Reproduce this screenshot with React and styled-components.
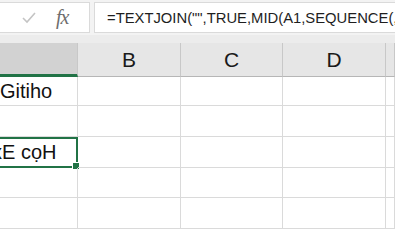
import React from "react";
import styled, { createGlobalStyle } from "styled-components";

const GlobalStyle = createGlobalStyle`
  html, body {
    margin: 0;
    padding: 0;
    background: #ffffff;
    overflow: hidden;
  }
  body {
    font-family: "Liberation Sans", Arial, sans-serif;
  }
`;

const Sheet = styled.div`
  width: 395px;
  height: 229px;
  overflow: hidden;
  display: flex;
  flex-direction: column;
  background: #ffffff;
`;

const FormulaBar = styled.div`
  height: 35px;
  box-sizing: border-box;
  padding: 2px 0 2px 0;
  display: flex;
  gap: 4px;
  background: #f3f3f3;
`;

const NameArea = styled.div`
  width: 90px;
  box-sizing: border-box;
  background: #ffffff;
  border: 1px solid #dadada;
  border-left: none;
  display: flex;
  align-items: center;
  padding-left: 22px;
  gap: 20px;
`;

const Fx = styled.span`
  font-family: "Liberation Serif", "Times New Roman", serif;
  font-style: italic;
  font-size: 20px;
  color: #6e6e6e;
  letter-spacing: -1px;
`;

const FormulaInput = styled.div`
  flex: 1;
  box-sizing: border-box;
  background: #ffffff;
  border: 1px solid #dadada;
  border-right: none;
  display: flex;
  align-items: center;
  padding-left: 12px;
  font-size: 14.8px;
  color: #1e1e1e;
  white-space: nowrap;
  overflow: hidden;
`;

const Gap = styled.div`
  height: 8px;
  background: #ececec;
`;

const Row = styled.div`
  display: grid;
  grid-template-columns: 78px 103px 102px 103px 1fr;
  height: ${(p) => p.$h}px;
  flex: none;
`;

const HeaderCell = styled.div`
  box-sizing: border-box;
  background: ${(p) => (p.$active ? "#d2d2d2" : "#e6e6e6")};
  border-right: 1px solid #c8c8c8;
  border-bottom: ${(p) => (p.$active ? "3px solid #217346" : "1px solid #b6b6b6")};
  display: flex;
  align-items: center;
  justify-content: center;
  font-size: 21px;
  color: #1a1a1a;
`;

const Cell = styled.div`
  position: relative;
  box-sizing: border-box;
  border-right: 1px solid #dadada;
  border-bottom: 1px solid #dadada;
  display: flex;
  align-items: center;
  overflow: ${(p) => (p.$selected ? "visible" : "hidden")};
  white-space: nowrap;
  font-size: 20px;
  color: #111111;
  ${(p) =>
    p.$selected &&
    `
    border: 2px solid #217346;
    border-left: none;
  `}
`;

const Clip = styled.div`
  overflow: hidden;
  width: 100%;
`;

const CellText = styled.span`
  display: inline-block;
  margin-left: ${(p) => p.$shift || 0}px;
`;

const FillHandle = styled.div`
  position: absolute;
  right: -4px;
  bottom: -4px;
  width: 6px;
  height: 6px;
  background: #217346;
  border: 1px solid #ffffff;
  box-sizing: content-box;
`;

const rows = [
  { h: 29, text: "Gitiho", shift: 0 },
  { h: 31 },
  { h: 31, text: "xE cọH", shift: -8, selected: true },
  { h: 30 },
  { h: 31 },
];

export default function App() {
  return (
    <Sheet>
      <GlobalStyle />
      <FormulaBar>
        <NameArea>
          <svg width="14" height="12" viewBox="0 0 14 12">
            <polyline
              points="1,6 5,10 13,1"
              fill="none"
              stroke="#c4c4c4"
              strokeWidth="1.6"
            />
          </svg>
          <Fx>fx</Fx>
        </NameArea>
        <FormulaInput>=TEXTJOIN("",TRUE,MID(A1,SEQUENCE(,LEN(A1),LEN(A1),-1),1))</FormulaInput>
      </FormulaBar>
      <Gap />
      <Row $h={34}>
        <HeaderCell $active />
        <HeaderCell>B</HeaderCell>
        <HeaderCell>C</HeaderCell>
        <HeaderCell>D</HeaderCell>
        <HeaderCell />
      </Row>
      {rows.map((r, i) => (
        <Row key={i} $h={r.h}>
          <Cell $selected={r.selected}>
            <Clip>
              {r.text && <CellText $shift={r.shift}>{r.text}</CellText>}
            </Clip>
            {r.selected && <FillHandle />}
          </Cell>
          <Cell />
          <Cell />
          <Cell />
          <Cell />
        </Row>
      ))}
    </Sheet>
  );
}
